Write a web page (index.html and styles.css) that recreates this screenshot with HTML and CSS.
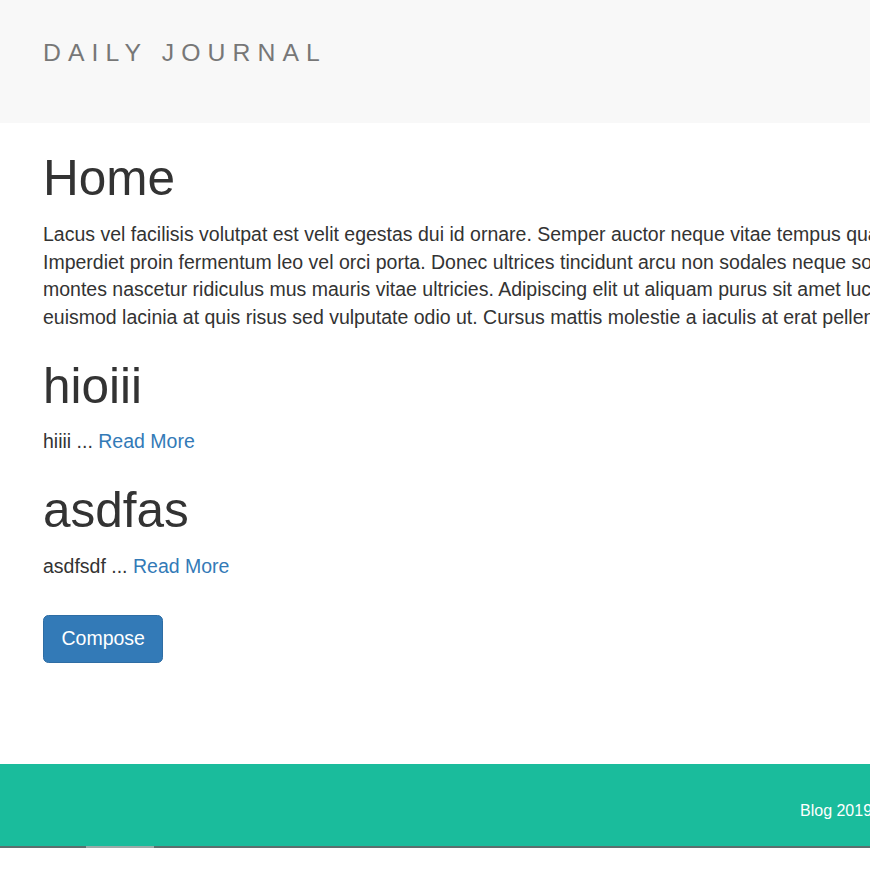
FILE: index.html
```html
<!DOCTYPE html>
<html lang="en">
<head>
<meta charset="utf-8">
<title>Daily Journal</title>
<link rel="stylesheet" href="styles.css">
</head>
<body>
<nav class="navbar">
  <div class="container">
    <a class="brand" href="#">DAILY JOURNAL</a>
  </div>
</nav>
<main class="container content">
  <h1 class="page-title">Home</h1>
  <p class="intro">Lacus vel facilisis volutpat est velit egestas dui id ornare. Semper auctor neque vitae tempus quam. Sit amet cursus sit amet dictum sit amet justo. Viverra tellus in hac habitasse.<br>Imperdiet proin fermentum leo vel orci porta. Donec ultrices tincidunt arcu non sodales neque sodales ut. Mattis molestie a iaculis at erat pellentesque adipiscing. Magnis dis parturient<br>montes nascetur ridiculus mus mauris vitae ultricies. Adipiscing elit ut aliquam purus sit amet luctus venenatis lectus. Ultrices vitae auctor eu augue ut lectus arcu bibendum at. Odio<br>euismod lacinia at quis risus sed vulputate odio ut. Cursus mattis molestie a iaculis at erat pellentesque adipiscing.</p>
  <section class="post">
    <h1>hioiii</h1>
    <p>hiiii ... <a href="#">Read More</a></p>
  </section>
  <section class="post">
    <h1>asdfas</h1>
    <p>asdfsdf ... <a href="#">Read More</a></p>
  </section>
  <a class="btn" href="#">Compose</a>
</main>
<footer class="footer">
  <p class="footer-text">Blog 2019</p>
</footer>
<div class="scrollbar"><div class="thumb"></div></div>
</body>
</html>
```
FILE: styles.css
```css
html, body {
  overflow-x: hidden;
}
body {
  margin: 0;
  font-family: "Liberation Sans", Arial, sans-serif;
  font-size: 19.5px;
  line-height: 27.5px;
  color: #333;
  background: #fff;
}
.navbar {
  background: #f8f8f8;
  height: 123px;
  box-sizing: border-box;
  padding-top: 38px;
}
.container {
  padding-left: 43px;
}
.brand {
  display: block;
  font-size: 24.75px;
  line-height: 30px;
  letter-spacing: 7.1px;
  color: #777;
  text-decoration: none;
  white-space: nowrap;
}
.content {
  padding-top: 27.5px;
  padding-bottom: 101.5px;
}
h1 {
  font-weight: 500;
  font-size: 49.5px;
  line-height: 54.45px;
  margin: 27.5px 0 15px;
}
.page-title {
  margin-top: 0;
  margin-bottom: 16.5px;
}
p {
  margin: 0 0 13.75px;
  white-space: nowrap;
}
a {
  color: #337ab7;
  text-decoration: none;
}
.btn {
  display: inline-block;
  margin-top: 20.5px;
  padding: 9.25px 17.5px;
  border: 1.375px solid #2e6da4;
  border-radius: 5.5px;
  background: #337ab7;
  color: #fff;
  font-size: 19.5px;
  line-height: 27.5px;
}
.footer {
  background: #1abc9c;
  height: 82px;
  box-sizing: border-box;
  padding: 36.5px 0 0 800px;
}
.footer-text {
  margin: 0;
  color: #fff;
  font-size: 16px;
  line-height: 20px;
}
.scrollbar {
  height: 2px;
  background: #5b6f6e;
}
.thumb {
  margin-left: 86px;
  width: 68px;
  height: 2px;
  background: #9aaaa8;
}
```
